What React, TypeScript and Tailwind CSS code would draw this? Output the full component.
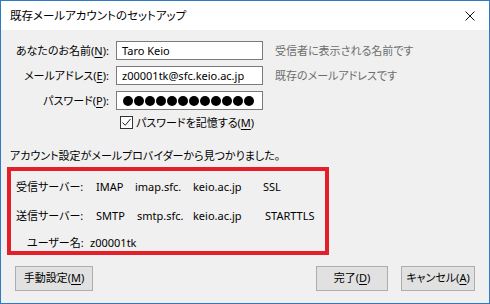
const font = "[font-family:'Noto_Sans','Noto_Sans_CJK_JP',sans-serif] [font-feature-settings:'palt']";

const Mn: React.FC<{ k: string }> = ({ k }) => (
  <>
    (<span className="underline underline-offset-2">{k}</span>)
  </>
);

const Button: React.FC<{ w: string; children: React.ReactNode }> = ({ w, children }) => (
  <div className={`${w} h-[25px] flex items-center justify-center bg-[#e1e1e1] border border-[#adadad] text-black`}>
    {children}
  </div>
);

export default function App() {
  return (
    <div className={`${font} w-[490px] h-[304px] flex flex-col border border-[#2e7ac7] bg-[#f0f0f0] text-[11px] text-black overflow-hidden`}>
      {/* title bar */}
      <div className="h-[29px] shrink-0 bg-white flex items-center justify-between pl-[9px] pr-[10px]">
        <span className="text-[11.5px] leading-none">既存メールアカウントのセットアップ</span>
        <svg width="10" height="10" viewBox="0 0 10 10" className="mr-[4px]">
          <path d="M0.5 0.5 L9.5 9.5 M9.5 0.5 L0.5 9.5" stroke="#111" strokeWidth="1" />
        </svg>
      </div>

      <div className="flex-1 flex flex-col">
        {/* form */}
        <div className="grid grid-cols-[108px_147px_auto] gap-x-[7px] gap-y-[6px] pt-[11px] items-center">
          <div className="text-right leading-none">あなたのお名前<Mn k="N" />:</div>
          <div className="h-[19px] bg-white border border-[#7a7a7a] flex items-center pl-[5px] leading-none">Taro Keio</div>
          <div className="pl-[5px] text-[#6d6d6d] leading-none">受信者に表示される名前です</div>

          <div className="text-right leading-none">メールアドレス<Mn k="E" />:</div>
          <div className="h-[19px] bg-white border border-[#7a7a7a] flex items-center pl-[5px] leading-none">z00001tk@sfc.keio.ac.jp</div>
          <div className="pl-[5px] text-[#6d6d6d] leading-none">既存のメールアドレスです</div>

          <div className="text-right leading-none">パスワード<Mn k="P" />:</div>
          <div className="h-[19px] bg-white border border-[#7a7a7a] flex items-center pl-[6px] gap-[1px]">
            {Array.from({ length: 12 }).map((_, i) => (
              <div key={i} className="w-[10px] h-[10px] rounded-full bg-black" />
            ))}
          </div>
          <div />
        </div>

        {/* remember password */}
        <div className="flex items-center mt-[6px] ml-[119px] h-[13px]">
          <div className="w-[13px] h-[13px] bg-white border border-[#333] flex items-center justify-center">
            <svg width="11" height="11" viewBox="0 0 11 11">
              <path d="M1.5 5.5 L4.2 8.3 L9.5 2" fill="none" stroke="#222" strokeWidth="1" />
            </svg>
          </div>
          <span className="ml-[3px] leading-none">パスワードを記憶する<Mn k="M" /></span>
        </div>

        <div className="mt-[21px] ml-[9px] leading-none">アカウント設定がメールプロバイダーから見つかりました。</div>

        {/* detected settings */}
        <div className="mt-[6px] ml-[6px] w-[322px] h-[88px] border-[4px] border-[#e3202a] flex flex-col pl-[5px] pt-[7px] leading-none">
          <div className="flex items-center h-[16px]">
            <span className="w-[80px]">受信サーバー:</span>
            <span className="w-[39px]">IMAP</span>
            <span className="w-[58px]">imap.sfc.</span>
            <span className="w-[70px]">keio.ac.jp</span>
            <span>SSL</span>
          </div>
          <div className="flex items-center h-[16px] mt-[13px]">
            <span className="w-[80px]">送信サーバー:</span>
            <span className="w-[41px]">SMTP</span>
            <span className="w-[56px]">smtp.sfc.</span>
            <span className="w-[72px]">keio.ac.jp</span>
            <span>STARTTLS</span>
          </div>
          <div className="flex items-center h-[16px] mt-[11px] pl-[11px]">
            <span className="w-[63px]">ユーザー名:</span>
            <span>z00001tk</span>
          </div>
        </div>

        {/* buttons */}
        <div className="flex items-center mt-[11px] pl-[14px] pr-[14px]">
          <Button w="w-[78px]">手動設定<Mn k="M" /></Button>
          <div className="flex-1" />
          <Button w="w-[72px]">完了<Mn k="D" /></Button>
          <div className="w-[13px]" />
          <Button w="w-[74px]">キャンセル<Mn k="A" /></Button>
        </div>
      </div>
    </div>
  );
}
